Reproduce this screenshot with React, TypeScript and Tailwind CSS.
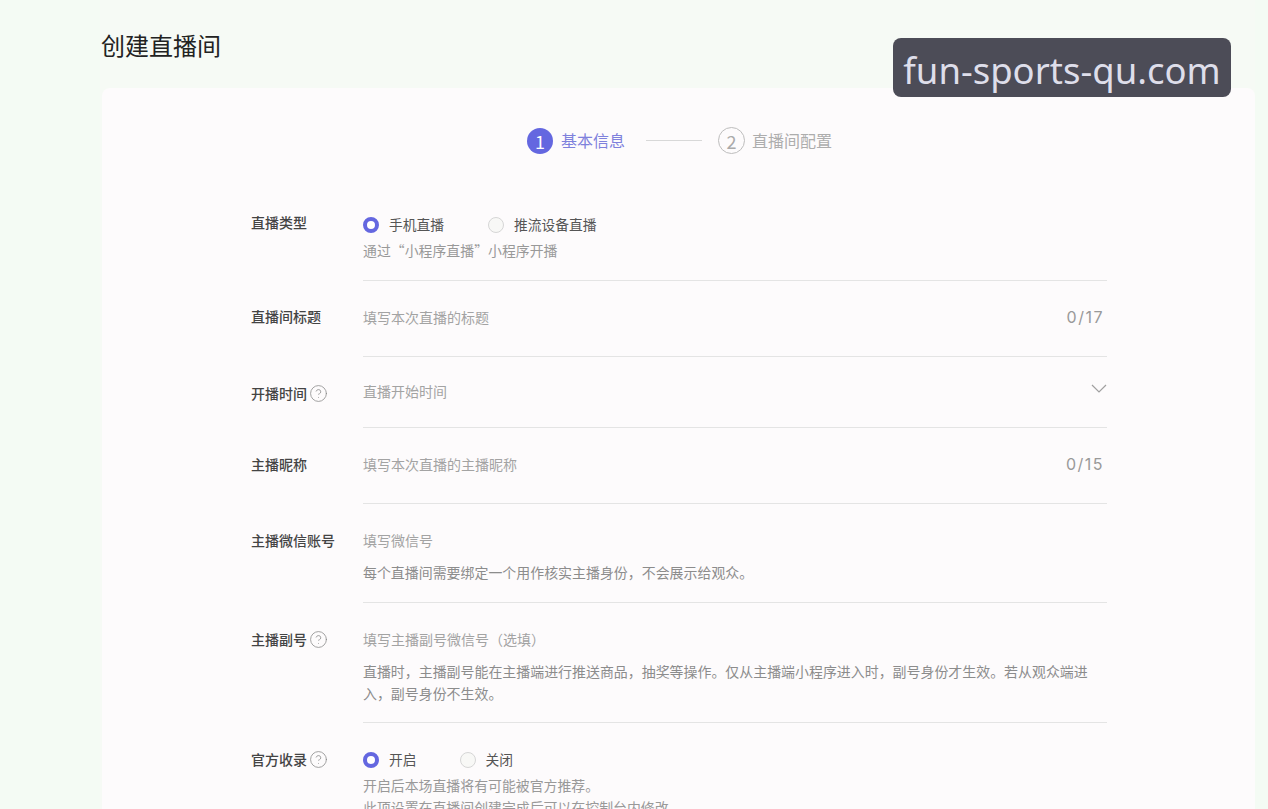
import { CircleHelp } from 'lucide-react';
import type { ReactNode } from 'react';

function Help() {
    return <CircleHelp size={19} strokeWidth={1} className="ml-[2px] text-[#8a8a8a]" />
}

function Radio({ label, checked, className }: { label: string; checked?: boolean; className?: string }) {
    return (
        <div className={`flex items-center ${className ?? ''}`}>
            {checked
                ? <span className="w-4 h-4 mt-[1px] rounded-full border-[4px] border-[#6467e0] bg-white" />
                : <span className="w-4 h-4 mt-[1px] rounded-full border border-[#d6d6d6] bg-[#f8f8f6]" />}
            <span className="text-[#555] ml-[10px] text-[13.75px]">{label}</span>
        </div>
    )
}

function Row({ label, help, top = 'pt-[25px]', bottom, last, labelShift = '', children }: {
    label: string; help?: boolean; top?: string; bottom: string; last?: boolean; labelShift?: string; children: ReactNode
}) {
    return (
        <div className={`flex ${top}`}>
            <div className={`w-[112px] shrink-0 h-[22px] flex items-center text-[14px] font-medium text-[#444] ${labelShift}`}>
                {label}{help && <Help />}
            </div>
            <div className={`flex-1 ${bottom} ${last ? '' : 'border-b border-[#e4e4e4]'}`}>
                {children}
            </div>
        </div>
    )
}

function Input({ text, count }: { text: string; count?: string }) {
    return (
        <div className="flex items-center justify-between h-[22px] text-[14px] text-[#a3a3a3]">
            <span>{text}</span>
            {count && <span className="font-['Inter',sans-serif] text-[16px] tracking-[1.5px] text-[#999] mr-[3px] -mt-[1px]">{count}</span>}
        </div>
    )
}

export default function App() {
    return (
        <div className="h-[809px] overflow-hidden relative flex bg-[#f4fbf4] font-['Noto_Sans_CJK_SC','Noto_Sans',sans-serif] leading-[22px]">
            <div className="w-[100px] shrink-0" />
            <div className="w-[1155px] shrink-0 bg-[#f6faf5] pl-[2px]">
                <h1 className="pt-[30px] h-[88px] text-[24px] leading-[30px] text-[#222] -ml-[1px]">创建直播间</h1>
                <div className="bg-[#fdfbfc] rounded-lg h-[900px] pl-[149px] pr-[148px]">
                    <div className="flex items-center justify-center h-[106px] pb-[1px] pl-[1px] text-[16px]">
                        <span className="w-[26px] h-[26px] rounded-full bg-[#6467e0] text-white text-[18px] flex items-center justify-center">1</span>
                        <span className="ml-2 -mt-[2px] text-[#7f81dc]">基本信息</span>
                        <span className="w-[56px] h-px bg-[#d8d8d8] ml-[21px] mr-[16px]" />
                        <span className="w-[27px] h-[27px] rounded-full border border-[#bdbdbd] text-[#aaa] text-[18px] flex items-center justify-center">2</span>
                        <span className="ml-[7px] -mt-[2px] text-[#adadad]">直播间配置</span>
                    </div>

                    <Row label="直播类型" top="pt-[19px]" bottom="pb-[19px]" labelShift="-mt-[2px]">
                        <div className="flex h-[22px] items-center">
                            <Radio label="手机直播" checked />
                            <Radio label="推流设备直播" className="ml-[44px]" />
                        </div>
                        <p className="mt-1 text-[13.9px] text-[#999]">通过“小程序直播”小程序开播</p>
                    </Row>
                    <Row label="直播间标题" bottom="pb-[28px]" labelShift="-mt-[1px]">
                        <Input text="填写本次直播的标题" count="0/17" />
                    </Row>
                    <Row label="开播时间" help top="pt-[23px]" bottom="pb-[25px]" labelShift="mt-[2px]">
                        <div className="relative">
                            <Input text="直播开始时间" />
                            <svg width="16" height="10" viewBox="0 0 16 10" className="absolute right-0 top-[4px]" fill="none" stroke="#a0a0a0" strokeWidth="1.2">
                                <path d="M1 1l7 7 7-7" />
                            </svg>
                        </div>
                    </Row>
                    <Row label="主播昵称" bottom="pb-[28px]">
                        <Input text="填写本次直播的主播昵称" count="0/15" />
                    </Row>
                    <Row label="主播微信账号" bottom="pb-[19px]">
                        <Input text="填写微信号" />
                        <p className="mt-[10px] text-[13.95px] text-[#8c8c8c]">每个直播间需要绑定一个用作核实主播身份，不会展示给观众。</p>
                    </Row>
                    <Row label="主播副号" help bottom="pb-[18px]">
                        <Input text="填写主播副号微信号（选填）" />
                        <p className="mt-[10px] text-[13.95px] text-[#8c8c8c] pr-4">直播时，主播副号能在主播端进行推送商品，抽奖等操作。仅从主播端小程序进入时，副号身份才生效。若从观众端进入，副号身份不生效。</p>
                    </Row>
                    <Row label="官方收录" help bottom="pb-4" last>
                        <div className="flex h-[22px] items-center">
                            <Radio label="开启" checked />
                            <Radio label="关闭" className="ml-[43px]" />
                        </div>
                        <p className="mt-1 text-[13.9px] text-[#999]">开启后本场直播将有可能被官方推荐。</p>
                        <p className="text-[13.9px] text-[#999]">此项设置在直播间创建完成后可以在控制台内修改。</p>
                    </Row>
                </div>
            </div>
            <div className="absolute left-[893px] top-[38px] w-[338px] h-[59px] pt-[5px] rounded-lg bg-[#4c4c57] flex items-center justify-center text-[#dedeea] text-[36.5px] font-['Noto_Sans',sans-serif]">
                fun-sports-qu.com
            </div>
        </div>
    )
}
